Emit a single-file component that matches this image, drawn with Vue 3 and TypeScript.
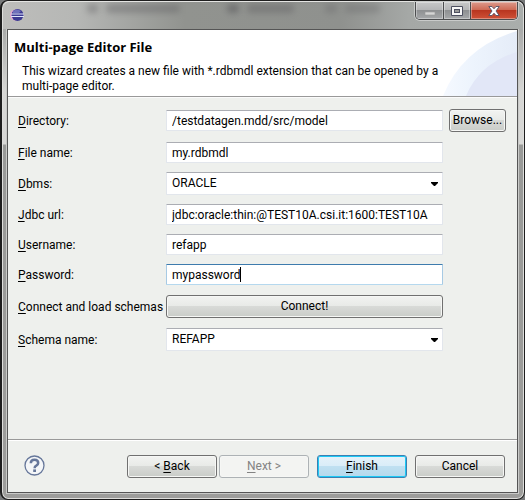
<script setup lang="ts">
import { ref } from 'vue'

type Kind = 'text' | 'select' | 'button'

interface Row {
  id: string
  kind: Kind
  mnemonic: string
  rest: string
  browse?: boolean
  active?: boolean
}

const rows: Row[] = [
  { id: 'directory', kind: 'text', mnemonic: 'D', rest: 'irectory:', browse: true },
  { id: 'filename', kind: 'text', mnemonic: 'F', rest: 'ile name:' },
  { id: 'dbms', kind: 'select', mnemonic: 'D', rest: 'bms:' },
  { id: 'url', kind: 'text', mnemonic: 'J', rest: 'dbc url:' },
  { id: 'username', kind: 'text', mnemonic: 'U', rest: 'sername:' },
  { id: 'password', kind: 'text', mnemonic: 'P', rest: 'assword:', active: true },
  { id: 'connect', kind: 'button', mnemonic: 'C', rest: 'onnect and load schemas' },
  { id: 'schema', kind: 'select', mnemonic: 'S', rest: 'chema name:' },
]

const values = ref<Record<string, string>>({
  directory: '/testdatagen.mdd/src/model',
  filename: 'my.rdbmdl',
  dbms: 'ORACLE',
  url: 'jdbc:oracle:thin:@TEST10A.csi.it:1600:TEST10A',
  username: 'refapp',
  password: 'mypassword',
  schema: 'REFAPP',
})
</script>

<template>
  <div class="window">
    <div class="titlebar">
      <svg class="logo" viewBox="0 0 14 14" aria-hidden="true">
        <circle cx="5.5" cy="7" r="5.5" fill="#e7a6d2" />
        <circle cx="7.5" cy="7" r="6" fill="#3c3a92" />
        <path d="M3 3Q7 0 11 3L9 5H3Z" fill="#6f70bb" />
        <path d="M1 6H14M1 8.5H14" stroke="#dfe3fa" stroke-width="1" />
      </svg>
      <div class="glass" aria-hidden="true">
        <i class="smudge s1"></i><i class="smudge s2"></i><i class="smudge s3"></i><i class="smudge s4"></i><i class="smudge s5"></i><i class="smudge s6"></i>
      </div>
      <div class="controls">
        <button class="ctl min" type="button" aria-label="Minimize">
          <svg viewBox="0 0 12 10"><rect x="1" y="6" width="10" height="3" fill="#d5d5d5" stroke="#999" stroke-width=".6" /></svg>
        </button>
        <button class="ctl max" type="button" aria-label="Maximize">
          <svg viewBox="0 0 12 10"><path d="M.5.5H11.5V9.5H.5Z" fill="#f7f7f7" stroke="#4d4f60" /><rect x="3.5" y="3.5" width="5" height="3" fill="#999" stroke="#4d4f60" /></svg>
        </button>
        <button class="ctl close" type="button" aria-label="Close">
          <svg viewBox="0 0 12 10"><path d="M.8.5H4L6 2.8 8 .5H11.2L8 5 11.2 9.5H8L6 7.2 4 9.5H.8L4 5Z" fill="#fff" stroke="#555064" stroke-width=".9" /></svg>
        </button>
      </div>
    </div>

    <main class="client">
      <header class="banner">
        <div class="banner-text">
          <h1>Multi-page Editor File</h1>
          <p>This wizard creates a new file with *.rdbmdl extension that can be opened by a multi-page editor.</p>
        </div>
        <svg class="swoosh" viewBox="0 0 74 66" aria-hidden="true">
          <defs>
            <linearGradient id="arc" x1="0" x2="1">
              <stop offset="0" stop-color="#f5f9ff" />
              <stop offset=".4" stop-color="#edf4fd" />
              <stop offset="1" stop-color="#e5ecf8" />
            </linearGradient>
          </defs>
          <path d="M0 66Q20 17 74 1V66Z" fill="url(#arc)" />
          <path d="M23 66Q37 33 74 22V66Z" fill="#e2e7f7" />
        </svg>
      </header>

      <form class="form" @submit.prevent>
        <template v-for="row in rows" :key="row.id">
          <label :for="row.id"><u>{{ row.mnemonic }}</u>{{ row.rest }}</label>
          <div v-if="row.kind === 'text'" class="cell">
            <input :id="row.id" v-model="values[row.id]" class="field" :class="{ active: row.active }" type="text" spellcheck="false" autocomplete="off" />
            <i v-if="row.active" class="caret"></i>
          </div>
          <div v-else-if="row.kind === 'select'" class="cell">
            <select :id="row.id" v-model="values[row.id]" class="field">
              <option>{{ values[row.id] }}</option>
            </select>
            <svg class="arrow" viewBox="0 0 7 4" aria-hidden="true"><path d="M0 0H7V1L4 4H3L0 1Z" /></svg>
          </div>
          <div v-else class="cell pad">
            <button :id="row.id" class="btn" type="button">Connect!</button>
          </div>
          <div class="side">
            <button v-if="row.browse" class="btn" type="button">Browse...</button>
          </div>
        </template>
      </form>

      <footer class="footer">
        <button class="help" type="button" aria-label="Help">
          <svg viewBox="0 0 21 21">
            <circle cx="10.5" cy="10.5" r="9.5" fill="#f4f6f8" stroke="#66779a" stroke-width="1.3" />
            <path d="M6.8 8.2Q6.8 4.7 10.5 4.7T14.2 8Q14.2 9.6 12.3 10.7 10.6 11.6 10.6 13.2" fill="none" stroke="#66779a" stroke-width="2.5" />
            <rect x="9.2" y="14.4" width="2.8" height="2.6" fill="#66779a" />
          </svg>
        </button>
        <div class="nav">
          <button class="btn" type="button">&lt;&nbsp;<u>B</u>ack</button>
          <button class="btn" type="button" disabled><u>N</u>ext &gt;</button>
        </div>
        <button class="btn primary" type="button"><u>F</u>inish</button>
        <button class="btn" type="button">Cancel</button>
      </footer>
    </main>
  </div>
</template>

<style>
body {
  margin: 0;
  background: #77797a;
}
</style>

<style scoped>
* {
  box-sizing: border-box;
}

.window {
  display: flex;
  flex-direction: column;
  min-height: 100vh;
  padding: 0 6px 6px 5px;
  border: 1px solid #1e1e1e;
  border-left-width: 2px;
  border-radius: 8px;
  background:
    linear-gradient(#b0b1b0 0, #a9aaa9 28px, #d6d6d4 90px, #d8d8d6 143px, #999a98 144px, #9d9d9b 100%);
  box-shadow: inset 0 0 0 1px #dededc;
  font-family: Roboto, "Open Sans", sans-serif;
  font-size: 12px;
  line-height: 15px;
  color: #000;
}

.titlebar {
  position: relative;
  display: flex;
  align-items: flex-start;
  height: 28px;
  margin: 0 -5px 0 -4px;
  padding: 0 5px 0 7px;
  border-top: 1px solid #e4e4e2;
  border-radius: 7px 7px 0 0;
  background: linear-gradient(90deg, #bdbdbb, #b6b7b5 14%, #91938f 35%, #8f918e 65%, #a5a8a6 78%, #aaaeac);
}

.logo {
  width: 14px;
  height: 14px;
  margin-top: 6px;
}

.glass {
  position: relative;
  flex: 1;
  align-self: stretch;
  overflow: hidden;
}

.smudge {
  position: absolute;
  top: 2px;
  height: 9px;
  border-radius: 4px;
  background: #5c5b5e;
  filter: blur(3px);
  opacity: 0.4;
}

.s1 { left: 16%; width: 3%; }
.s2 { left: 21%; width: 19%; }
.s3 { left: 52%; width: 3%; opacity: 0.6; }
.s4 { left: 57%; width: 12%; }
.s5 { left: 77%; width: 3%; opacity: 0.3; }
.s6 { left: 82%; width: 9%; opacity: 0.3; }

.controls {
  display: flex;
  border: 1px solid #4c4d4f;
  border-top: 0;
  border-radius: 0 0 5px 5px;
  box-shadow: 0 0 0 1px #c9cbca;
  overflow: hidden;
}

.ctl {
  display: flex;
  align-items: center;
  justify-content: center;
  height: 17px;
  padding: 0;
  border: 0;
  border-right: 1px solid #4c4d4f;
  background: linear-gradient(#c7c8c9, #b4b5b7 48%, #8e9092 50%, #a6a8aa);
  box-shadow: inset 0 0 0 1px rgb(255 255 255 / 35%);
}

.ctl svg {
  width: 12px;
  height: 10px;
}

.min { width: 28px; }
.max { width: 27px; }

.close {
  width: 46px;
  border-right: 0;
  background: linear-gradient(#dc9a8c, #cd6852 48%, #b93620 50%, #cf5137);
}

.client {
  display: flex;
  flex: 1;
  flex-direction: column;
  border: 1px solid #555;
  background: #eef0ed;
  box-shadow: 0 0 0 1px #c9cac8;
}

.banner {
  display: flex;
  height: 67px;
  border-bottom: 1px solid #999;
  background: #fff;
}

.banner-text {
  flex: 1;
  min-width: 0;
  padding: 10px 0 0 6px;
}

.swoosh {
  flex: none;
  width: 74px;
  height: 66px;
}

h1 {
  margin: 0;
  font-family: "Open Sans", sans-serif;
  font-size: 13px;
  line-height: 15px;
}

p {
  margin: 9px 0 0;
  padding-left: 8px;
}

.form {
  display: grid;
  flex: 1;
  grid-template-columns: 142px 1fr 57px;
  align-content: start;
  align-items: center;
  gap: 9px 6px;
  padding: 10px 11px 0 10px;
  border-top: 1px solid #fbfbfb;
}

label {
  padding-top: 2px;
  white-space: nowrap;
}

u {
  text-underline-offset: 2px;
}

.cell {
  position: relative;
  display: flex;
}

.cell.pad,
.side:has(.btn) {
  padding: 1px 0;
}

.field {
  width: 100%;
  height: 21px;
  padding: 0 5px;
  border: 1px solid #e2e6ec;
  border-top-color: #abadb3;
  border-radius: 1px;
  outline: 0;
  background: #fff;
  color: #000;
  font: inherit;
}

select.field {
  height: 23px;
  appearance: none;
}

.field.active {
  border-color: #3d7bad #a7cae4 #b5d8ee;
}

.caret {
  position: absolute;
  top: 3px;
  left: 74px;
  width: 1px;
  height: 15px;
  background: #000;
}

.arrow {
  position: absolute;
  top: 10px;
  right: 5px;
  width: 7px;
  height: 4px;
  pointer-events: none;
}

.btn {
  width: 100%;
  height: 23px;
  padding: 0;
  border: 1px solid #707070;
  border-radius: 3px;
  background: linear-gradient(#f2f3f1, #e8eae7 48%, #d8dad7 50%, #c9ccc8);
  box-shadow: inset 0 0 0 1px #f6f7f5;
  color: #000;
  font: inherit;
}

.footer {
  display: flex;
  gap: 8px;
  height: 53px;
  padding: 14px 12px 0 16px;
  border-top: 1px solid #999;
  box-shadow: inset 0 1px #fff;
}

.footer .btn {
  width: 90px;
  margin-top: 1px;
}

.nav {
  display: flex;
  gap: 2px;
  margin-left: auto;
}

.footer .btn:disabled {
  border-color: #adb2b5;
  background: #f3f4f2;
  color: #838383;
}

.footer .primary {
  border-color: #3c7fb1;
  background: linear-gradient(#e5f2f9, #d9edf8 48%, #bfe0f1 50%, #b5d9ec);
  box-shadow: inset 0 0 0 1px #1cc9f5;
}

.help {
  width: 21px;
  height: 21px;
  margin-top: 1px;
  padding: 0;
  border: 0;
  background: none;
}

.help svg {
  display: block;
  width: 21px;
  height: 21px;
}
</style>
